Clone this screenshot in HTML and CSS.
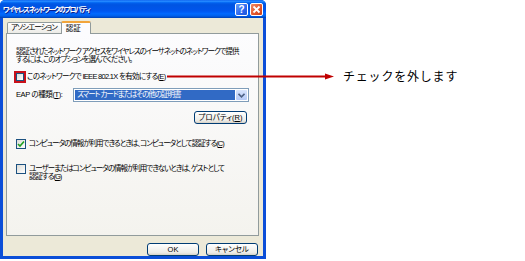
FILE: index.html
```html
<!DOCTYPE html>
<html lang="ja">
<head>
  <meta charset="UTF-8">
  <title>ワイヤレス ネットワークのプロパティ</title>
  <link rel="stylesheet" href="styles.css">
</head>
<body>
  <div class="page">
    <div class="dialog">
      <div class="titlebar">
        <span class="title">ワイヤレス ネットワークのプロパティ</span>
        <span class="tbtn help">?</span>
        <span class="tbtn close">
          <svg width="9" height="9" viewBox="0 0 9 9"><path d="M1.5 1.5 L7.5 7.5 M7.5 1.5 L1.5 7.5" stroke="#fff" stroke-width="1.8" fill="none"/></svg>
        </span>
      </div>
      <div class="client">
        <div class="tabs">
          <span class="tab">アソシエーション</span>
          <span class="tab active">認証</span>
        </div>
        <div class="panel">
          <p class="intro">認証されたネットワーク アクセスをワイヤレスのイーサネットのネットワークで提供<br>するには、このオプションを選んでください。</p>

          <div class="row check-first">
            <span class="hl"><span class="box small"></span></span>
            <span class="label">このネットワークで IEEE 802.1X を有効にする(<u>E</u>)</span>
          </div>

          <div class="row eap">
            <span class="label eap-label">EAP の種類(<u>T</u>):</span>
            <div class="select">
              <span class="sel-text">スマート カードまたはその他の証明書</span>
              <span class="drop">
                <svg width="7" height="5" viewBox="0 0 7 5"><path d="M0.5 0.8 L3.5 3.8 L6.5 0.8" stroke="#4d6185" stroke-width="1.6" fill="none"/></svg>
              </span>
            </div>
          </div>

          <div class="row props">
            <button class="btn">プロパティ(<u>R</u>)</button>
          </div>

          <div class="row check">
            <span class="box">
              <svg width="8" height="8" viewBox="0 0 8 8"><path d="M1 4 L3 6 L7 1.5" stroke="#21a121" stroke-width="1.6" fill="none"/></svg>
            </span>
            <span class="label">コンピュータの情報が利用できるときは、コンピュータとして認証する(<u>C</u>)</span>
          </div>

          <div class="row check">
            <span class="box"></span>
            <span class="label">ユーザーまたはコンピュータの情報が利用できないときは、ゲストとして<br>認証する(<u>G</u>)</span>
          </div>
        </div>
        <div class="actions">
          <button class="btn wide">OK</button>
          <button class="btn wide">キャンセル</button>
        </div>
      </div>
    </div>

    <div class="note">チェックを外します</div>

    <!-- pointer from the checkbox label to the note -->
    <svg class="arrow" width="170" height="9" viewBox="0 0 170 9">
      <rect x="0" y="3.5" width="160" height="2" fill="#c00000"/>
      <path d="M158 1.5 L167 4.5 L158 7.5 Z" fill="#c00000"/>
    </svg>
  </div>
</body>
</html>
```

FILE: styles.css
```css
body {
  margin: 0;
  background: #fff;
  font-family: "Liberation Sans", "Noto Sans CJK JP", sans-serif;
}

.page {
  position: relative;
  display: flex;
  align-items: flex-start;
  width: 525px;
  height: 261px;
}

/* XP style window */
.dialog {
  width: 266px;
  height: 259px;
  box-sizing: border-box;
  display: flex;
  flex-direction: column;
  padding: 0 3px 3px;
  background: #0b4ed8;
  border-radius: 5px 5px 0 0;
  font-size: 7.5px;
  font-feature-settings: "palt";
  letter-spacing: -1px;
  white-space: nowrap;
  color: #000;
}

.titlebar {
  display: flex;
  align-items: center;
  height: 19px;
  margin: 0 -3px;
  padding: 0 3px 0 3px;
  border-radius: 5px 5px 0 0;
  background: linear-gradient(to bottom, #0058ee 0%, #3593ff 6%, #127dff 10%, #0262ee 16%, #0057e5 22%, #0054e3 30%, #0055eb 56%, #005bf5 66%, #026afe 76%, #0062ef 86%, #0052d6 94%, #0040ab 100%);
}

.title {
  flex: 1;
  color: #fff;
  font-weight: bold;
  font-size: 7px;
  letter-spacing: -1.4px;
  text-shadow: 1px 1px 0 #0a1e8a;
}

.tbtn {
  width: 13px;
  height: 13px;
  box-sizing: border-box;
  margin-left: 2px;
  display: flex;
  align-items: center;
  justify-content: center;
  border: 1px solid #fff;
  border-radius: 2px;
  color: #fff;
  font-weight: bold;
  font-size: 10px;
  letter-spacing: 0;
}

.help {
  background: linear-gradient(135deg, #6a9ff7, #2c68ef 60%, #1e55d8);
}

.close {
  background: linear-gradient(135deg, #f08a63, #e2552a 60%, #c8401a);
}

.client {
  flex: 1;
  display: flex;
  flex-direction: column;
  padding: 2px 3px 0;
  background: #ece9d8;
}

.tabs {
  display: flex;
  align-items: flex-end;
  padding-left: 1px;
  position: relative;
  z-index: 1;
  height: 13px;
}

.tab {
  height: 10px;
  line-height: 10px;
  padding: 0 4px 0 3px;
  border: 1px solid #919b9c;
  border-bottom: none;
  border-radius: 2px 2px 0 0;
  background: linear-gradient(to bottom, #fff, #ecebe6);
}

.tab.active {
  height: 11px;
  line-height: 11px;
  margin-left: -1px;
  margin-bottom: -1px;
  padding: 0 9px 0 4px;
  border-top: 2px solid #f2a53b;
  background: #fcfcfe;
  letter-spacing: 0;
}

.panel {
  height: 203px;
  box-sizing: border-box;
  width: 253px;
  border: 1px solid #919b9c;
  background: linear-gradient(to bottom, #fcfcfe, #f4f3ee);
  padding: 0 0 0 9px;
}

.intro {
  margin: 14px 0 0;
  line-height: 8px;
}

.row {
  display: flex;
  align-items: center;
}

.check-first {
  margin-top: 7px;
  height: 12px;
}

.check-first .label {
  letter-spacing: -0.7px;
}

.hl {
  width: 12px;
  height: 12px;
  box-sizing: border-box;
  margin-left: -2px;
  margin-right: 1px;
  border: 2px solid #c8101a;
  display: flex;
}

.box {
  width: 10px;
  height: 10px;
  box-sizing: border-box;
  flex-shrink: 0;
  border: 1px solid #1c5180;
  background: linear-gradient(135deg, #dcdcd7, #fff);
  display: flex;
  align-items: center;
  justify-content: center;
}

.box.small {
  width: 8px;
  height: 8px;
}

.label {
  line-height: 8px;
}

.eap {
  margin-top: 5px;
  height: 14px;
}

.eap-label {
  width: 57px;
  flex-shrink: 0;
  letter-spacing: -0.4px;
}

.select {
  width: 176px;
  height: 14px;
  box-sizing: border-box;
  display: flex;
  padding: 1px;
  border: 1px solid #7f9db9;
  background: #fff;
}

.sel-text {
  flex: 1;
  background: #316ac5;
  color: #fff;
  line-height: 10px;
  padding-left: 2px;
}

.drop {
  width: 11px;
  margin-left: 1px;
  display: flex;
  align-items: center;
  justify-content: center;
  border-radius: 1px;
  background: linear-gradient(to bottom, #d7e4fd, #b4c9f6);
}

.props {
  margin-top: 9px;
  justify-content: flex-end;
  padding-right: 11px;
}

.btn {
  height: 13px;
  padding: 0;
  border: 1px solid #003c74;
  border-radius: 3px;
  background: linear-gradient(to bottom, #fff, #ecebe6 80%, #d6d0c5);
  font: inherit;
  line-height: 10px;
  color: #000;
}

.props .btn {
  width: 53px;
}

.check {
  margin-top: 15px;
  align-items: flex-start;
}

.check .label {
  margin-left: 3px;
  margin-top: 1px;
}

.actions {
  display: flex;
  justify-content: flex-end;
  gap: 7px;
  margin-top: 7px;
  padding-right: 2px;
}

.btn.wide {
  width: 52px;
}

.note {
  margin: 69px 0 0 77px;
  font-family: "Noto Sans CJK JP", sans-serif;
  font-size: 12px;
  line-height: 14px;
  letter-spacing: 0.8px;
  color: #000;
}

.arrow {
  position: absolute;
  left: 167px;
  top: 72px;
}
```
